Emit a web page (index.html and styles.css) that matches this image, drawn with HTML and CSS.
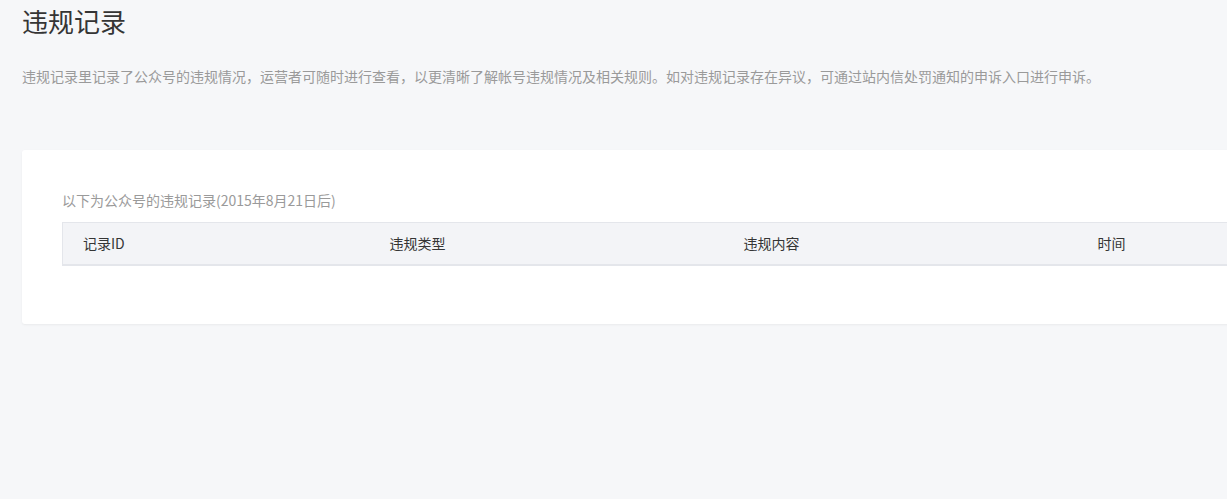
FILE: index.html
```html
<!DOCTYPE html>
<html lang="zh-CN">

<head>
    <meta charset="UTF-8">
    <meta name="viewport" content="width=device-width, initial-scale=1.0">
    <title>违规记录</title>
    <link rel="stylesheet" href="styles.css">
</head>

<body>
    <div class="page">
        <h1 class="page-title">违规记录</h1>
        <p class="page-desc">违规记录里记录了公众号的违规情况，运营者可随时进行查看，以更清晰了解帐号违规情况及相关规则。如对违规记录存在异议，可通过站内信处罚通知的申诉入口进行申诉。</p>

        <div class="card">
            <p class="card-caption">以下为公众号的违规记录(2015年8月21日后)</p>
            <table class="record-table">
                <thead>
                    <tr>
                        <th class="col-id">记录ID</th>
                        <th class="col-type">违规类型</th>
                        <th class="col-content">违规内容</th>
                        <th class="col-time">时间</th>
                    </tr>
                </thead>
                <tbody></tbody>
            </table>
        </div>
    </div>
</body>

</html>
```

FILE: styles.css
```css
* {
    margin: 0;
    padding: 0;
    box-sizing: border-box;
}

body {
    background-color: #f6f7f9;
    font-family: "Noto Sans CJK SC", "Liberation Sans", sans-serif;
    color: #353535;
    overflow: hidden;
    height: 100vh;
}

.page {
    padding: 0 0 0 22px;
    width: 100%;
    height: 100%;
    overflow: hidden;
}

.page-title {
    margin-top: 3px;
    font-size: 26px;
    line-height: 36px;
    font-weight: normal;
    color: #353535;
}

.page-desc {
    margin-top: 27px;
    font-size: 14px;
    line-height: 20px;
    color: #9a9a9a;
    white-space: nowrap;
}

.card {
    margin-top: 64px;
    width: 1340px;
    height: 174px;
    padding: 40px 40px 0;
    background-color: #fff;
    border-radius: 3px;
    box-shadow: 0 1px 2px rgba(150, 150, 150, .12);
}

.card-caption {
    font-size: 14px;
    line-height: 20px;
    color: #9a9a9a;
}

.record-table {
    margin-top: 12px;
    width: 100%;
    border-collapse: collapse;
    table-layout: fixed;
}

.record-table th {
    height: 42px;
    padding: 0 0 0 21px;
    text-align: left;
    font-size: 14px;
    font-weight: normal;
    color: #353535;
    background-color: #f3f4f7;
    border-top: 1px solid #e4e6eb;
    border-bottom: 2px solid #e4e6eb;
}

.record-table th:first-child {
    padding-left: 20px;
    border-left: 1px solid #e4e6eb;
}

.col-id {
    width: 306px;
}

.col-type,
.col-content {
    width: 354px;
}
```
